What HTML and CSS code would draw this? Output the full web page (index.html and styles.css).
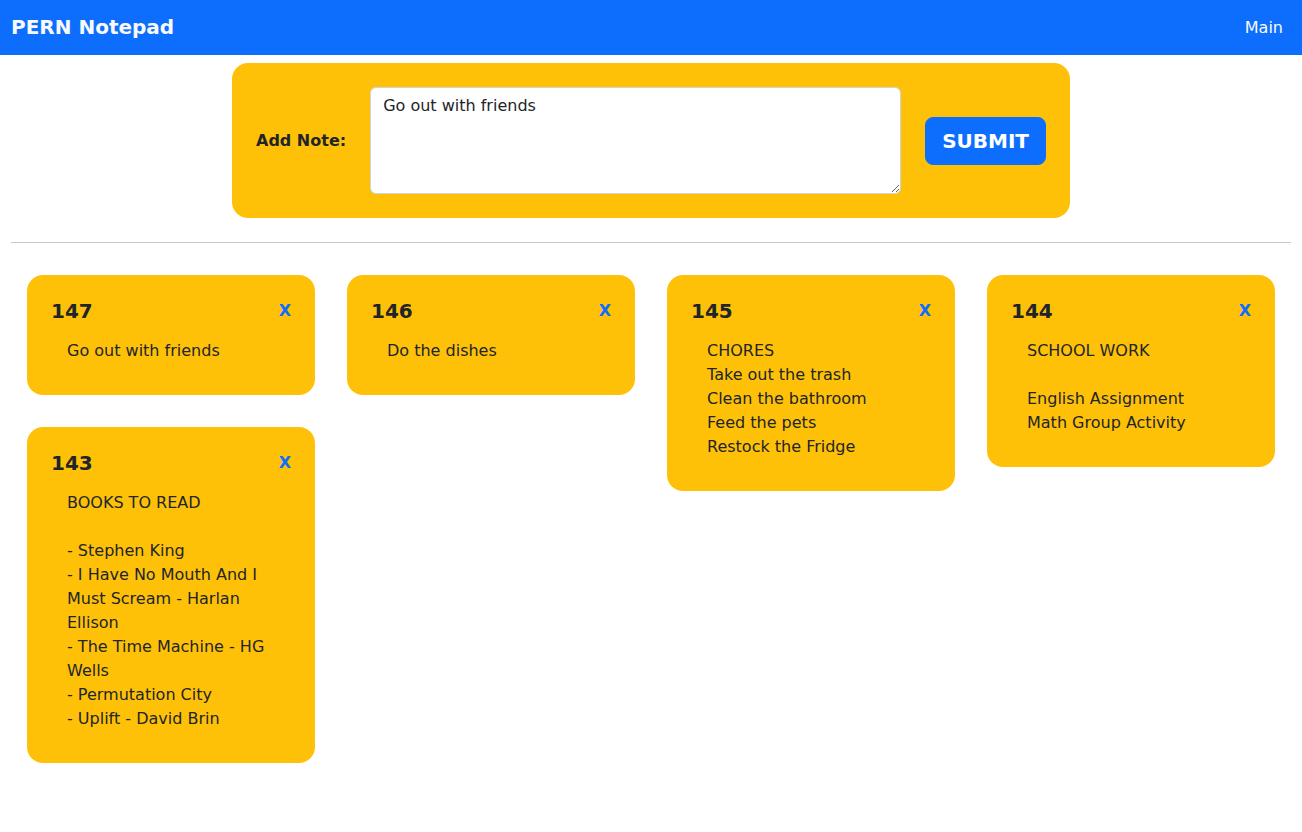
FILE: index.html
```html
<!DOCTYPE html>
<html lang="en">
<head>
<meta charset="utf-8">
<meta name="viewport" content="width=device-width, initial-scale=1">
<title>PERN Notepad</title>
<link rel="stylesheet" href="styles.css">
</head>
<body>
<header class="navbar">
  <a class="brand" href="#">PERN Notepad</a>
  <nav><a class="nav-link" href="#">Main</a></nav>
</header>
<main class="content">
  <form class="note-form">
    <label class="form-label" for="note">Add Note:</label>
    <textarea class="form-input" id="note">Go out with friends</textarea>
    <button class="submit" type="button">SUBMIT</button>
  </form>
  <hr class="divider">
  <section class="board">
    <div class="column">
      <article class="note">
        <div class="note-head"><h2 class="note-id">147</h2><button class="delete" type="button">X</button></div>
        <p class="note-text">Go out with friends</p>
      </article>
      <article class="note">
        <div class="note-head"><h2 class="note-id">143</h2><button class="delete" type="button">X</button></div>
        <p class="note-text">BOOKS TO READ

- Stephen King
- I Have No Mouth And I Must Scream - Harlan Ellison
- The Time Machine - HG Wells
- Permutation City
- Uplift - David Brin</p>
      </article>
    </div>
    <div class="column">
      <article class="note">
        <div class="note-head"><h2 class="note-id">146</h2><button class="delete" type="button">X</button></div>
        <p class="note-text">Do the dishes</p>
      </article>
    </div>
    <div class="column">
      <article class="note">
        <div class="note-head"><h2 class="note-id">145</h2><button class="delete" type="button">X</button></div>
        <p class="note-text">CHORES
Take out the trash
Clean the bathroom
Feed the pets
Restock the Fridge</p>
      </article>
    </div>
    <div class="column">
      <article class="note">
        <div class="note-head"><h2 class="note-id">144</h2><button class="delete" type="button">X</button></div>
        <p class="note-text">SCHOOL WORK

English Assignment
Math Group Activity</p>
      </article>
    </div>
  </section>
</main>
</body>
</html>
```

FILE: styles.css
```css
*, *::before, *::after {
  box-sizing: border-box;
}

body {
  margin: 0;
  background: #fff;
  color: #212529;
  font: 16px/24px "DejaVu Sans", sans-serif;
}

button, textarea {
  font: inherit;
}

.navbar {
  display: flex;
  align-items: center;
  justify-content: space-between;
  padding: 12px 11px;
  background: #0d6efd;
}

.brand {
  color: #f8f9fa;
  font-size: 20px;
  font-weight: 700;
  line-height: 31px;
  text-decoration: none;
}

.nav-link {
  padding: 0 8px;
  color: #f8f9fa;
  text-decoration: none;
}

.content {
  padding: 8px 11px;
}

.note-form {
  display: flex;
  align-items: center;
  gap: 24px;
  max-width: 838px;
  margin: 0 auto;
  padding: 24px;
  border-radius: 16px;
  background: #ffc107;
}

.form-label {
  flex: none;
  font-weight: 700;
}

.form-input {
  flex: 1;
  min-width: 0;
  height: 107px;
  padding: 6px 12px;
  border: 1px solid #ced4da;
  border-radius: 6px;
  background: #fff;
  color: #212529;
  resize: vertical;
}

.submit {
  flex: none;
  padding: 8px 16px;
  border: 1px solid #0d6efd;
  border-radius: 8px;
  background: #0d6efd;
  color: #fff;
  font-size: 20px;
  font-weight: 700;
  line-height: 30px;
}

.divider {
  height: 1px;
  margin: 24px 0 32px;
  border: 0;
  background: #c8c9ca;
}

.board {
  display: grid;
  grid-template-columns: repeat(auto-fill, minmax(280px, 1fr));
  gap: 32px;
  padding: 0 16px;
}

.column {
  display: flex;
  flex-direction: column;
  gap: 32px;
}

.note {
  padding: 24px 24px 32px;
  border-radius: 16px;
  background: #ffc107;
}

.note-head {
  display: flex;
  align-items: center;
  justify-content: space-between;
}

.note-id {
  margin: 0;
  font-size: 20px;
  font-weight: 700;
  line-height: 24px;
}

.delete {
  padding: 0;
  border: 0;
  background: none;
  color: #0d6efd;
  font-weight: 700;
}

.note-text {
  margin: 16px 16px 0;
  white-space: pre-wrap;
}
```
